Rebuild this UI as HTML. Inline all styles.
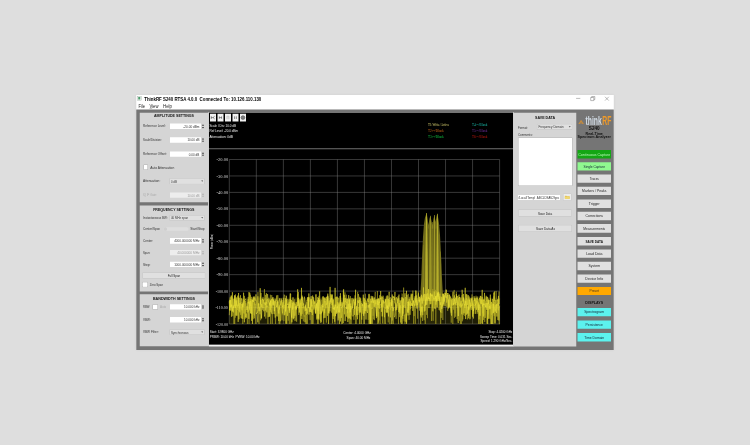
<!DOCTYPE html>
<html><head><meta charset="utf-8"><title>ThinkRF S240 RTSA</title>
<style>
html,body{margin:0;padding:0;}
body{width:750px;height:445px;background:#dedede;position:relative;overflow:hidden;font-family:"Liberation Sans",sans-serif;}
#r{position:absolute;left:0;top:0;width:750px;height:445px;overflow:hidden;filter:blur(0.4px);}
#s{position:absolute;left:0;top:0;width:3000px;height:1780px;transform:scale(0.25);transform-origin:0 0;}
#s div,#s svg,#s .t{position:absolute;}
#s .t{white-space:nowrap;display:block;}
</style></head><body><div id="r"><div id="s">
<div style="left:544.80px;top:380px;width:1910px;height:1020.40px;background:#ffffff;box-shadow:0 0 12px rgba(0,0,0,.06);"></div>
<div style="left:544.80px;top:438.40px;width:1910px;height:962px;background:#757575;"></div>
<div style="left:548.80px;top:384.40px;width:18.40px;height:17.20px;background:#f4f6f4;border:1.40px solid #7a8a80;box-sizing:border-box;"></div>
<div style="left:552.80px;top:388.40px;width:8px;height:10px;background:#4a9a6a;"></div>
<span class="t" style="top:384.56px;font-size:18.40px;line-height:22.08px;color:#000;font-family:'Liberation Sans',sans-serif;font-weight:bold;left:577.20px;transform:scaleX(0.952);transform-origin:left center;">ThinkRF S240 RTSA 4.0.0&nbsp; Connected To: 10.126.110.130</span>
<span class="t" style="top:413.76px;font-size:18.40px;line-height:22.08px;color:#222;font-family:'Liberation Sans',sans-serif;left:554.40px;transform:scaleX(0.863);transform-origin:left center;">File</span>
<span class="t" style="top:413.76px;font-size:18.40px;line-height:22.08px;color:#222;font-family:'Liberation Sans',sans-serif;left:598.40px;transform:scaleX(0.9);transform-origin:left center;"><u>V</u>iew</span>
<span class="t" style="top:413.76px;font-size:18.40px;line-height:22.08px;color:#222;font-family:'Liberation Sans',sans-serif;left:652px;transform:scaleX(0.951);transform-origin:left center;">Help</span>
<svg style="left:2280px;top:376px" width="176" height="40" viewBox="0 0 44 10"><g stroke="#666" stroke-width="0.45" fill="none"><path d="M6.1 4.4h4.2"/><path d="M20.7 3.5h3.1v3.1h-3.1zM21.7 3.5v-1h3.1v3.1h-1"/><path d="M35.0 2.8l3.8 3.8M38.8 2.8l-3.8 3.8"/></g></svg>
<div style="left:558.80px;top:450.80px;width:274.40px;height:358.40px;background:#d5d5d5;"></div>
<div style="left:558.80px;top:822px;width:274.40px;height:344px;background:#d5d5d5;"></div>
<div style="left:558.80px;top:1177.20px;width:274.40px;height:208px;background:#d5d5d5;"></div>
<span class="t" style="top:452.32px;font-size:16.80px;line-height:20.16px;color:#111;font-family:'Liberation Sans',sans-serif;font-weight:bold;left:696px;transform:translateX(-50%) scaleX(0.857);transform-origin:center center;">AMPLITUDE SETTINGS</span>
<span class="t" style="top:494.40px;font-size:16px;line-height:19.20px;color:#333;font-family:'Liberation Sans',sans-serif;left:572px;transform:scaleX(0.751);transform-origin:left center;">Reference Level:</span>
<div style="left:679.60px;top:493.60px;width:124.40px;height:22.80px;background:#ffffff;"></div>
<span class="t" style="top:495.40px;font-size:16px;line-height:19.20px;color:#333;font-family:'Liberation Sans',sans-serif;right:2202.40px;transform:scaleX(0.783);transform-origin:right center;">-20.00 dBm</span>
<svg style="left:805.60px;top:493.60px" width="12" height="22.8" viewBox="0 0 3 5.70"><path d="M0.4 2.35l1.1 -1.5l1.1 1.5zM0.4 3.45l1.1 1.5l1.1 -1.5z" fill="#333"/></svg>
<span class="t" style="top:550px;font-size:16px;line-height:19.20px;color:#333;font-family:'Liberation Sans',sans-serif;left:572px;transform:scaleX(0.713);transform-origin:left center;">Scale/Division:</span>
<div style="left:679.60px;top:548.80px;width:124.40px;height:22.40px;background:#ffffff;"></div>
<span class="t" style="top:550.40px;font-size:16px;line-height:19.20px;color:#333;font-family:'Liberation Sans',sans-serif;right:2202.40px;transform:scaleX(0.756);transform-origin:right center;">10.00 dB</span>
<svg style="left:805.60px;top:548.80px" width="12" height="22.4" viewBox="0 0 3 5.60"><path d="M0.4 2.30l1.1 -1.5l1.1 1.5zM0.4 3.40l1.1 1.5l1.1 -1.5z" fill="#333"/></svg>
<span class="t" style="top:606.40px;font-size:16px;line-height:19.20px;color:#333;font-family:'Liberation Sans',sans-serif;left:572px;transform:scaleX(0.758);transform-origin:left center;">Reference Offset:</span>
<div style="left:679.60px;top:605.60px;width:124.40px;height:21.60px;background:#ffffff;"></div>
<span class="t" style="top:606.80px;font-size:16px;line-height:19.20px;color:#333;font-family:'Liberation Sans',sans-serif;right:2202.40px;transform:scaleX(0.769);transform-origin:right center;">0.00 dB</span>
<svg style="left:805.60px;top:605.60px" width="12" height="21.6" viewBox="0 0 3 5.40"><path d="M0.4 2.20l1.1 -1.5l1.1 1.5zM0.4 3.30l1.1 1.5l1.1 -1.5z" fill="#333"/></svg>
<div style="left:575.60px;top:660.40px;width:14.80px;height:17.60px;background:#fff;box-shadow:0 0 0 1.20px #999;"></div>
<span class="t" style="top:660px;font-size:16px;line-height:19.20px;color:#333;font-family:'Liberation Sans',sans-serif;left:600.80px;transform:scaleX(0.817);transform-origin:left center;">Auto Attenuation</span>
<span class="t" style="top:713.60px;font-size:16px;line-height:19.20px;color:#333;font-family:'Liberation Sans',sans-serif;left:572px;transform:scaleX(0.81);transform-origin:left center;">Attenuation:</span>
<div style="left:679.60px;top:714px;width:136.80px;height:20.80px;background:#e0e0e0;box-shadow:0 0 0 1.20px #bdbdbd;"></div>
<span class="t" style="top:714.80px;font-size:16px;line-height:19.20px;color:#333;font-family:'Liberation Sans',sans-serif;left:684.40px;transform:scaleX(0.705);transform-origin:left center;">0 dB</span>
<svg style="left:803.60px;top:720.40px" width="9.6" height="8" viewBox="0 0 2.4 2"><path d="M0.2 0.4h2l-1 1.3z" fill="#444"/></svg>
<span class="t" style="top:769.60px;font-size:16px;line-height:19.20px;color:#aaa;font-family:'Liberation Sans',sans-serif;left:572px;transform:scaleX(0.716);transform-origin:left center;">IQ IF Gain:</span>
<div style="left:679.60px;top:769.60px;width:124.40px;height:21.60px;background:#ededed;"></div>
<span class="t" style="top:770.80px;font-size:16px;line-height:19.20px;color:#999;font-family:'Liberation Sans',sans-serif;right:2202.40px;transform:scaleX(0.756);transform-origin:right center;">10.00 dB</span>
<svg style="left:805.60px;top:769.60px" width="12" height="21.6" viewBox="0 0 3 5.40"><path d="M0.4 2.20l1.1 -1.5l1.1 1.5zM0.4 3.30l1.1 1.5l1.1 -1.5z" fill="#aaa"/></svg>
<span class="t" style="top:829.12px;font-size:16.80px;line-height:20.16px;color:#111;font-family:'Liberation Sans',sans-serif;font-weight:bold;left:695.20px;transform:translateX(-50%) scaleX(0.85);transform-origin:center center;">FREQUENCY SETTINGS</span>
<span class="t" style="top:860.80px;font-size:16px;line-height:19.20px;color:#333;font-family:'Liberation Sans',sans-serif;left:572px;transform:scaleX(0.726);transform-origin:left center;">Instantaneous BW:</span>
<div style="left:679.60px;top:861.60px;width:136.80px;height:19.60px;background:#e0e0e0;box-shadow:0 0 0 1.20px #bdbdbd;"></div>
<span class="t" style="top:861.80px;font-size:16px;line-height:19.20px;color:#333;font-family:'Liberation Sans',sans-serif;left:684.40px;transform:scaleX(0.726);transform-origin:left center;">40 MHz span</span>
<svg style="left:803.60px;top:867.40px" width="9.6" height="8" viewBox="0 0 2.4 2"><path d="M0.2 0.4h2l-1 1.3z" fill="#444"/></svg>
<span class="t" style="top:906.40px;font-size:16px;line-height:19.20px;color:#333;font-family:'Liberation Sans',sans-serif;left:572px;transform:scaleX(0.757);transform-origin:left center;">Center/Span</span>
<div style="left:654px;top:908.80px;width:100px;height:14.40px;background:#dedede;border-radius:6px;"></div>
<div style="left:654.80px;top:909.20px;width:13.20px;height:13.60px;background:#cfcfcf;border-radius:6px;"></div>
<span class="t" style="top:906.40px;font-size:16px;line-height:19.20px;color:#333;font-family:'Liberation Sans',sans-serif;right:2182px;transform:scaleX(0.804);transform-origin:right center;">Start/Stop</span>
<span class="t" style="top:952.40px;font-size:16px;line-height:19.20px;color:#333;font-family:'Liberation Sans',sans-serif;left:572px;transform:scaleX(0.778);transform-origin:left center;">Center:</span>
<div style="left:679.60px;top:952.40px;width:124.40px;height:22.80px;background:#ffffff;"></div>
<span class="t" style="top:954.20px;font-size:16px;line-height:19.20px;color:#333;font-family:'Liberation Sans',sans-serif;right:2202.40px;transform:scaleX(0.774);transform-origin:right center;">4000.000000 MHz</span>
<svg style="left:805.60px;top:952.40px" width="12" height="22.8" viewBox="0 0 3 5.70"><path d="M0.4 2.35l1.1 -1.5l1.1 1.5zM0.4 3.45l1.1 1.5l1.1 -1.5z" fill="#333"/></svg>
<span class="t" style="top:999.20px;font-size:16px;line-height:19.20px;color:#333;font-family:'Liberation Sans',sans-serif;left:572px;transform:scaleX(0.689);transform-origin:left center;">Span:</span>
<div style="left:679.60px;top:999.60px;width:124.40px;height:21.60px;background:#ededed;"></div>
<span class="t" style="top:1000.80px;font-size:16px;line-height:19.20px;color:#999;font-family:'Liberation Sans',sans-serif;right:2202.40px;transform:scaleX(0.79);transform-origin:right center;">40.000000 MHz</span>
<svg style="left:805.60px;top:999.60px" width="12" height="21.6" viewBox="0 0 3 5.40"><path d="M0.4 2.20l1.1 -1.5l1.1 1.5zM0.4 3.30l1.1 1.5l1.1 -1.5z" fill="#aaa"/></svg>
<span class="t" style="top:1047.20px;font-size:16px;line-height:19.20px;color:#333;font-family:'Liberation Sans',sans-serif;left:572px;transform:scaleX(0.803);transform-origin:left center;">Step:</span>
<div style="left:679.60px;top:1046.80px;width:124.40px;height:20.80px;background:#ffffff;"></div>
<span class="t" style="top:1047.60px;font-size:16px;line-height:19.20px;color:#333;font-family:'Liberation Sans',sans-serif;right:2202.40px;transform:scaleX(0.774);transform-origin:right center;">1000.000000 MHz</span>
<svg style="left:805.60px;top:1046.80px" width="12" height="20.8" viewBox="0 0 3 5.20"><path d="M0.4 2.10l1.1 -1.5l1.1 1.5zM0.4 3.20l1.1 1.5l1.1 -1.5z" fill="#333"/></svg>
<div style="left:571.20px;top:1091.60px;width:248px;height:20.40px;background:#e0e0e0;box-shadow:0 0 0 1.20px #bdbdbd;"></div>
<span class="t" style="top:1092.40px;font-size:16px;line-height:19.20px;color:#222;font-family:'Liberation Sans',sans-serif;left:695.60px;transform:translateX(-50%) scaleX(0.734);transform-origin:center center;">Full Span</span>
<div style="left:570.40px;top:1128.80px;width:19.60px;height:18px;background:#fff;box-shadow:0 0 0 1.20px #999;"></div>
<span class="t" style="top:1128px;font-size:16px;line-height:19.20px;color:#333;font-family:'Liberation Sans',sans-serif;left:599.20px;transform:scaleX(0.707);transform-origin:left center;">Zero Span</span>
<span class="t" style="top:1182.72px;font-size:16.80px;line-height:20.16px;color:#111;font-family:'Liberation Sans',sans-serif;font-weight:bold;left:696px;transform:translateX(-50%) scaleX(0.876);transform-origin:center center;">BANDWIDTH SETTINGS</span>
<span class="t" style="top:1218px;font-size:16px;line-height:19.20px;color:#333;font-family:'Liberation Sans',sans-serif;left:572px;transform:scaleX(0.675);transform-origin:left center;">RBW:</span>
<div style="left:612px;top:1218.80px;width:18.40px;height:18px;background:#fff;box-shadow:0 0 0 1.20px #999;"></div>
<span class="t" style="top:1218px;font-size:16px;line-height:19.20px;color:#aaa;font-family:'Liberation Sans',sans-serif;left:640px;transform:scaleX(0.741);transform-origin:left center;">Auto</span>
<div style="left:679.60px;top:1216.80px;width:124.40px;height:21.60px;background:#ffffff;"></div>
<span class="t" style="top:1218px;font-size:16px;line-height:19.20px;color:#333;font-family:'Liberation Sans',sans-serif;right:2202.40px;transform:scaleX(0.766);transform-origin:right center;">10.000 kHz</span>
<svg style="left:805.60px;top:1216.80px" width="12" height="21.6" viewBox="0 0 3 5.40"><path d="M0.4 2.20l1.1 -1.5l1.1 1.5zM0.4 3.30l1.1 1.5l1.1 -1.5z" fill="#333"/></svg>
<span class="t" style="top:1268.80px;font-size:16px;line-height:19.20px;color:#333;font-family:'Liberation Sans',sans-serif;left:572px;transform:scaleX(0.739);transform-origin:left center;">VBW:</span>
<div style="left:679.60px;top:1268px;width:124.40px;height:21.60px;background:#ffffff;"></div>
<span class="t" style="top:1269.20px;font-size:16px;line-height:19.20px;color:#333;font-family:'Liberation Sans',sans-serif;right:2202.40px;transform:scaleX(0.766);transform-origin:right center;">10.000 kHz</span>
<svg style="left:805.60px;top:1268px" width="12" height="21.6" viewBox="0 0 3 5.40"><path d="M0.4 2.20l1.1 -1.5l1.1 1.5zM0.4 3.30l1.1 1.5l1.1 -1.5z" fill="#333"/></svg>
<span class="t" style="top:1318.40px;font-size:16px;line-height:19.20px;color:#333;font-family:'Liberation Sans',sans-serif;left:572px;transform:scaleX(0.771);transform-origin:left center;">VBW Filter:</span>
<div style="left:679.60px;top:1318.80px;width:136.80px;height:19.20px;background:#e0e0e0;box-shadow:0 0 0 1.20px #bdbdbd;"></div>
<span class="t" style="top:1318.80px;font-size:16px;line-height:19.20px;color:#333;font-family:'Liberation Sans',sans-serif;left:684.40px;transform:scaleX(0.75);transform-origin:left center;">Synchronous</span>
<svg style="left:803.60px;top:1324.40px" width="9.6" height="8" viewBox="0 0 2.4 2"><path d="M0.2 0.4h2l-1 1.3z" fill="#444"/></svg>
<div style="left:833.20px;top:449.20px;width:2.80px;height:936px;background:#e8e8e8;"></div>
<div style="left:836px;top:1378.40px;width:1216px;height:7.60px;background:#f2f2f2;"></div>
<div style="left:2051.60px;top:449.20px;width:3.20px;height:936.80px;background:#ececec;"></div>
<div style="left:836px;top:452.40px;width:1215.60px;height:926px;background:#000;"></div>
<div style="left:840px;top:455.20px;width:24.40px;height:30.40px;background:#f2f2f2;"></div>
<svg style="left:839.40px;top:455.20px" width="25.6" height="30.4" viewBox="0 0 6.4 7.6"><path d="M1.5 2.5v2.7M1.5 3.85h1.7M4.9 2.5L3.3 3.85L4.9 5.2" stroke="#333" stroke-width="0.55" fill="none"/></svg>
<div style="left:869.96px;top:455.20px;width:24.40px;height:30.40px;background:#f2f2f2;"></div>
<svg style="left:869.36px;top:455.20px" width="25.6" height="30.4" viewBox="0 0 6.4 7.6"><path d="M2.1 2.7v2.3M4.3 2.7v2.3M2.1 3.85h2.2" stroke="#444" stroke-width="0.6" fill="none"/></svg>
<div style="left:899.92px;top:455.20px;width:24.40px;height:30.40px;background:#f2f2f2;"></div>
<svg style="left:899.32px;top:455.20px" width="25.6" height="30.4" viewBox="0 0 6.4 7.6"><path d="M2.3 2.3v3.1M4.1 2.3v3.1" stroke="#777" stroke-width="0.6" stroke-dasharray="0.5 0.4" fill="none"/><path d="M2.3 2.4h1.8" stroke="#aaa" stroke-width="0.4"/></svg>
<div style="left:929.88px;top:455.20px;width:24.40px;height:30.40px;background:#f2f2f2;"></div>
<svg style="left:929.28px;top:455.20px" width="25.6" height="30.4" viewBox="0 0 6.4 7.6"><path d="M2.3 2.6v2.6M4.1 2.6v2.6" stroke="#555" stroke-width="0.65" fill="none"/></svg>
<div style="left:959.84px;top:455.20px;width:24.40px;height:30.40px;background:#f2f2f2;"></div>
<svg style="left:959.24px;top:455.20px" width="25.6" height="30.4" viewBox="0 0 6.4 7.6"><circle cx="3.2" cy="3.85" r="2.2" fill="#6a6a6a"/><path d="M3.2 1.2v5.3M0.7 3.85h5" stroke="#999" stroke-width="0.4"/><ellipse cx="3.2" cy="3.85" rx="1.1" ry="2.2" fill="none" stroke="#8a8a8a" stroke-width="0.3"/></svg>
<span class="t" style="top:490.56px;font-size:16.40px;line-height:19.68px;color:#eee;font-family:'Liberation Sans',sans-serif;left:838.40px;transform:scaleX(0.736);transform-origin:left center;">Scale / Div: 10.0 dB</span>
<span class="t" style="top:513.76px;font-size:16.40px;line-height:19.68px;color:#eee;font-family:'Liberation Sans',sans-serif;left:838.40px;transform:scaleX(0.74);transform-origin:left center;">Ref Level: -20.0 dBm</span>
<span class="t" style="top:536.16px;font-size:16.40px;line-height:19.68px;color:#eee;font-family:'Liberation Sans',sans-serif;left:838.40px;transform:scaleX(0.775);transform-origin:left center;">Attenuation: 0dB</span>
<span class="t" style="top:491.28px;font-size:15.20px;line-height:18.24px;color:#d8d070;font-family:'Liberation Serif',serif;left:1712px;transform:scaleX(0.853);transform-origin:left center;">T1:Write/Active</span>
<span class="t" style="top:514.08px;font-size:15.20px;line-height:18.24px;color:#c86418;font-family:'Liberation Serif',serif;left:1712px;transform:scaleX(0.875);transform-origin:left center;">T2:--/Blank</span>
<span class="t" style="top:536.08px;font-size:15.20px;line-height:18.24px;color:#10c040;font-family:'Liberation Serif',serif;left:1712px;transform:scaleX(0.875);transform-origin:left center;">T3:--/Blank</span>
<span class="t" style="top:491.28px;font-size:15.20px;line-height:18.24px;color:#18b8a8;font-family:'Liberation Serif',serif;left:1888px;transform:scaleX(0.858);transform-origin:left center;">T4:--/Blank</span>
<span class="t" style="top:514.08px;font-size:15.20px;line-height:18.24px;color:#70309a;font-family:'Liberation Serif',serif;left:1888px;transform:scaleX(0.858);transform-origin:left center;">T5:--/Blank</span>
<span class="t" style="top:536.08px;font-size:15.20px;line-height:18.24px;color:#c01810;font-family:'Liberation Serif',serif;left:1888px;transform:scaleX(0.858);transform-origin:left center;">T6:--/Blank</span>
<div style="left:836px;top:593.20px;width:1215.60px;height:4px;background:#707070;"></div>
<svg style="left:0;top:0" width="3000" height="1780" viewBox="0 0 750 445"><path d="M229.30 159.5V324.0M229.3 159.50H499.6M256.33 159.5V324.0M229.3 175.95H499.6M283.36 159.5V324.0M229.3 192.40H499.6M310.39 159.5V324.0M229.3 208.85H499.6M337.42 159.5V324.0M229.3 225.30H499.6M364.45 159.5V324.0M229.3 241.75H499.6M391.48 159.5V324.0M229.3 258.20H499.6M418.51 159.5V324.0M229.3 274.65H499.6M445.54 159.5V324.0M229.3 291.10H499.6M472.57 159.5V324.0M229.3 307.55H499.6M499.60 159.5V324.0M229.3 324.00H499.6" stroke="#858585" stroke-width="0.42" fill="none"/><polygon points="419.8,301.0 419.8,301.0 420.6,291.1 421.3,277.9 422.0,258.2 423.0,236.8 424.0,223.7 424.9,217.9 425.7,215.4 426.7,213.0 427.6,218.7 428.4,225.3 429.4,218.7 430.4,215.8 431.4,220.4 432.5,225.3 433.5,218.7 434.5,215.1 435.6,222.0 436.4,217.1 437.2,213.8 438.2,217.9 439.0,223.7 440.0,235.2 441.0,254.9 441.8,274.6 442.6,289.5 443.6,301.0 443.6,301.0" fill="#6f6a1b"/><polygon points="426.15,213.0 426.85,213.0 427.65,258.2 428.05,301.0 424.95,301.0 425.35,258.2" fill="#c2ba2e" opacity="0.85"/><polygon points="430.05,215.8 430.75,215.8 431.40,258.2 431.80,301.0 429.00,301.0 429.40,258.2" fill="#a8a128" opacity="0.8"/><polygon points="432.05,222.0 432.75,222.0 433.00,258.2 433.40,301.0 431.40,301.0 431.80,258.2" fill="#989226" opacity="0.7"/><polygon points="434.15,215.1 434.85,215.1 435.40,258.2 435.80,301.0 433.20,301.0 433.60,258.2" fill="#aea62a" opacity="0.8"/><polygon points="437.05,213.8 437.75,213.8 438.50,258.2 438.90,301.0 435.90,301.0 436.30,258.2" fill="#c2ba2e" opacity="0.85"/><polygon points="422.95,245.0 423.65,245.0 423.75,258.2 424.15,301.0 422.45,301.0 422.85,258.2" fill="#8f8922" opacity="0.7"/><polygon points="440.25,251.6 440.95,251.6 441.05,258.2 441.45,301.0 439.75,301.0 440.15,258.2" fill="#8f8922" opacity="0.7"/><path d="M428.5 228.6V291.1" stroke="#4a4710" stroke-width="0.7" opacity="0.7"/><path d="M432.9 228.6V291.1" stroke="#4a4710" stroke-width="0.7" opacity="0.7"/><path d="M435.9 228.6V291.1" stroke="#4a4710" stroke-width="0.7" opacity="0.7"/><rect x="229.3" y="297.7" width="194.2" height="26.3" fill="#7d7818" opacity="0.25"/><rect x="423.5" y="301.0" width="17.5" height="23.0" fill="#5a5614" opacity="0.45"/><rect x="441" y="297.7" width="58.6" height="26.3" fill="#7d7818" opacity="0.25"/><polyline points="229.30,303.40 229.57,299.71 229.84,310.30 230.11,297.37 230.38,307.63 230.65,304.22 230.92,296.78 231.19,307.03 231.46,295.77 231.73,305.54 232.00,297.27 232.27,298.01 232.54,305.36 232.81,316.12 233.08,299.00 233.35,301.37 233.62,309.71 233.90,324.00 234.17,308.53 234.44,304.82 234.71,324.00 234.98,296.25 235.25,317.69 235.52,302.73 235.79,299.54 236.06,298.83 236.33,303.10 236.60,315.65 236.87,300.42 237.14,308.64 237.41,310.00 237.68,304.35 237.95,307.89 238.22,296.99 238.49,296.85 238.76,300.99 239.03,311.08 239.30,305.42 239.57,303.21 239.84,308.73 240.11,305.93 240.38,302.93 240.65,314.75 240.92,311.60 241.19,301.80 241.46,308.47 241.73,307.40 242.00,318.65 242.27,312.50 242.54,302.69 242.81,324.00 243.09,298.84 243.36,305.24 243.63,313.40 243.90,299.74 244.17,306.65 244.44,295.86 244.71,310.75 244.98,313.66 245.25,308.44 245.52,318.67 245.79,303.20 246.06,311.49 246.33,308.93 246.60,308.60 246.87,305.99 247.14,316.74 247.41,324.00 247.68,306.35 247.95,310.64 248.22,296.90 248.49,311.67 248.76,310.20 249.03,324.00 249.30,315.90 249.57,302.63 249.84,304.61 250.11,310.76 250.38,294.74 250.65,306.10 250.92,300.13 251.19,298.81 251.46,296.83 251.73,313.78 252.01,299.15 252.28,301.88 252.55,304.71 252.82,318.43 253.09,297.66 253.36,305.85 253.63,307.92 253.90,319.17 254.17,315.78 254.44,318.00 254.71,302.50 254.98,305.18 255.25,304.08 255.52,319.23 255.79,324.00 256.06,299.71 256.33,300.32 256.60,301.55 256.87,301.58 257.14,306.57 257.41,308.81 257.68,302.19 257.95,292.08 258.22,305.25 258.49,304.29 258.76,308.29 259.03,324.00 259.30,311.36 259.57,307.20 259.84,309.47 260.11,310.96 260.38,296.61 260.65,320.30 260.93,314.21 261.20,318.61 261.47,314.89 261.74,304.74 262.01,304.86 262.28,298.41 262.55,309.88 262.82,296.96 263.09,297.17 263.36,301.05 263.63,299.99 263.90,303.72 264.17,296.54 264.44,289.09 264.71,299.72 264.98,298.35 265.25,304.18 265.52,294.97 265.79,318.60 266.06,309.39 266.33,299.65 266.60,301.97 266.87,303.86 267.14,304.19 267.41,298.97 267.68,317.19 267.95,324.00 268.22,306.19 268.49,306.55 268.76,297.84 269.03,298.37 269.30,303.77 269.57,302.23 269.85,316.21 270.12,299.97 270.39,294.78 270.66,324.00 270.93,307.47 271.20,299.60 271.47,307.79 271.74,295.09 272.01,307.47 272.28,324.00 272.55,317.96 272.82,311.52 273.09,302.15 273.36,304.24 273.63,300.10 273.90,313.92 274.17,307.56 274.44,314.17 274.71,303.52 274.98,301.36 275.25,315.45 275.52,324.00 275.79,317.38 276.06,315.22 276.33,315.74 276.60,312.83 276.87,301.44 277.14,307.24 277.41,304.02 277.68,295.23 277.95,295.15 278.22,302.52 278.49,302.11 278.76,311.41 279.04,324.00 279.31,305.81 279.58,323.78 279.85,324.00 280.12,324.00 280.39,304.20 280.66,301.31 280.93,301.44 281.20,300.79 281.47,300.96 281.74,309.63 282.01,320.36 282.28,316.76 282.55,306.46 282.82,310.35 283.09,314.96 283.36,297.81 283.63,310.55 283.90,321.11 284.17,314.29 284.44,313.17 284.71,306.43 284.98,300.37 285.25,314.55 285.52,303.57 285.79,315.01 286.06,324.00 286.33,304.80 286.60,304.91 286.87,324.00 287.14,312.36 287.41,300.17 287.68,299.09 287.96,299.71 288.23,320.71 288.50,315.24 288.77,299.59 289.04,316.10 289.31,324.00 289.58,310.46 289.85,303.92 290.12,307.91 290.39,299.19 290.66,293.92 290.93,324.00 291.20,310.27 291.47,307.43 291.74,323.39 292.01,305.55 292.28,318.45 292.55,316.09 292.82,301.10 293.09,301.96 293.36,302.79 293.63,301.73 293.90,308.75 294.17,302.12 294.44,305.26 294.71,299.19 294.98,321.13 295.25,303.99 295.52,306.03 295.79,308.68 296.06,320.67 296.33,305.29 296.60,321.80 296.88,306.91 297.15,307.54 297.42,307.37 297.69,294.39 297.96,305.67 298.23,300.48 298.50,292.03 298.77,314.94 299.04,300.23 299.31,306.34 299.58,312.37 299.85,308.08 300.12,303.44 300.39,307.26 300.66,308.05 300.93,314.37 301.20,298.49 301.47,308.16 301.74,301.90 302.01,302.47 302.28,313.93 302.55,307.04 302.82,308.19 303.09,313.50 303.36,321.34 303.63,305.73 303.90,309.35 304.17,306.99 304.44,307.13 304.71,311.42 304.98,305.91 305.25,307.58 305.52,306.43 305.79,324.00 306.07,311.60 306.34,318.74 306.61,324.00 306.88,302.12 307.15,308.14 307.42,324.00 307.69,316.74 307.96,299.36 308.23,298.94 308.50,305.71 308.77,297.37 309.04,301.73 309.31,297.39 309.58,310.78 309.85,314.35 310.12,320.12 310.39,299.80 310.66,312.10 310.93,310.54 311.20,299.51 311.47,319.14 311.74,324.00 312.01,301.29 312.28,324.00 312.55,304.85 312.82,306.62 313.09,324.00 313.36,316.38 313.63,299.97 313.90,305.50 314.17,307.20 314.44,303.70 314.71,300.77 314.99,303.30 315.26,312.28 315.53,294.47 315.80,308.02 316.07,305.68 316.34,294.33 316.61,303.55 316.88,309.63 317.15,307.13 317.42,297.05 317.69,324.00 317.96,314.52 318.23,324.00 318.50,298.45 318.77,302.24 319.04,295.89 319.31,314.17 319.58,302.34 319.85,299.15 320.12,305.32 320.39,321.25 320.66,315.77 320.93,302.10 321.20,299.67 321.47,321.93 321.74,308.39 322.01,311.64 322.28,297.96 322.55,296.76 322.82,311.29 323.09,305.38 323.36,297.36 323.63,323.94 323.91,309.89 324.18,315.04 324.45,297.77 324.72,317.57 324.99,297.14 325.26,317.93 325.53,305.94 325.80,303.70 326.07,308.00 326.34,322.66 326.61,302.29 326.88,299.14 327.15,307.44 327.42,301.69 327.69,298.59 327.96,299.97 328.23,296.44 328.50,300.90 328.77,303.17 329.04,303.03 329.31,313.48 329.58,302.73 329.85,306.88 330.12,300.36 330.39,303.85 330.66,294.34 330.93,301.94 331.20,294.05 331.47,312.62 331.74,307.96 332.01,300.62 332.28,306.36 332.55,323.51 332.82,298.49 333.10,315.77 333.37,305.51 333.64,306.78 333.91,316.48 334.18,304.75 334.45,307.02 334.72,311.28 334.99,324.00 335.26,303.77 335.53,316.37 335.80,311.82 336.07,309.92 336.34,304.98 336.61,303.87 336.88,296.63 337.15,299.16 337.42,297.30 337.69,312.86 337.96,302.04 338.23,300.01 338.50,297.80 338.77,316.80 339.04,318.38 339.31,310.81 339.58,302.57 339.85,301.77 340.12,302.80 340.39,306.06 340.66,299.87 340.93,305.78 341.20,302.20 341.47,324.00 341.74,324.00 342.02,307.87 342.29,301.81 342.56,324.00 342.83,303.12 343.10,304.04 343.37,290.52 343.64,304.53 343.91,306.36 344.18,306.94 344.45,300.88 344.72,306.98 344.99,292.33 345.26,302.22 345.53,297.97 345.80,304.88 346.07,296.00 346.34,294.73 346.61,303.02 346.88,301.57 347.15,308.73 347.42,307.49 347.69,313.18 347.96,310.47 348.23,312.09 348.50,318.90 348.77,304.68 349.04,303.45 349.31,324.00 349.58,299.67 349.85,312.34 350.12,310.10 350.39,296.11 350.66,316.51 350.94,319.75 351.21,309.71 351.48,312.64 351.75,315.48 352.02,299.41 352.29,307.37 352.56,306.97 352.83,316.49 353.10,315.16 353.37,316.10 353.64,308.69 353.91,319.81 354.18,311.15 354.45,311.44 354.72,301.51 354.99,295.37 355.26,299.25 355.53,304.12 355.80,298.45 356.07,316.54 356.34,308.12 356.61,309.72 356.88,309.68 357.15,311.08 357.42,306.66 357.69,291.81 357.96,314.88 358.23,313.10 358.50,306.94 358.77,307.62 359.04,310.52 359.31,297.12 359.58,312.73 359.85,301.97 360.13,297.44 360.40,302.24 360.67,312.50 360.94,300.97 361.21,312.83 361.48,324.00 361.75,306.75 362.02,304.54 362.29,306.45 362.56,311.17 362.83,313.74 363.10,309.46 363.37,310.09 363.64,297.55 363.91,299.62 364.18,302.01 364.45,312.94 364.72,303.02 364.99,308.32 365.26,293.70 365.53,296.90 365.80,302.31 366.07,310.85 366.34,311.40 366.61,310.95 366.88,302.75 367.15,307.22 367.42,306.16 367.69,306.19 367.96,298.84 368.23,319.87 368.50,300.84 368.77,324.00 369.05,323.69 369.32,294.27 369.59,306.04 369.86,315.80 370.13,324.00 370.40,305.85 370.67,302.30 370.94,301.07 371.21,324.00 371.48,301.09 371.75,308.62 372.02,299.47 372.29,307.37 372.56,324.00 372.83,299.22 373.10,315.81 373.37,307.05 373.64,319.39 373.91,311.71 374.18,301.52 374.45,320.15 374.72,306.58 374.99,294.91 375.26,291.90 375.53,306.69 375.80,305.86 376.07,302.95 376.34,299.43 376.61,303.77 376.88,303.23 377.15,316.72 377.42,291.02 377.69,313.16 377.97,316.67 378.24,298.86 378.51,322.60 378.78,311.97 379.05,320.42 379.32,302.69 379.59,304.30 379.86,304.70 380.13,324.00 380.40,308.76 380.67,304.07 380.94,305.38 381.21,302.38 381.48,296.28 381.75,298.29 382.02,316.42 382.29,302.58 382.56,323.55 382.83,301.84 383.10,302.17 383.37,307.03 383.64,300.55 383.91,304.28 384.18,324.00 384.45,319.14 384.72,315.37 384.99,309.69 385.26,321.31 385.53,324.00 385.80,307.80 386.07,312.07 386.34,296.26 386.61,312.46 386.88,305.74 387.16,313.10 387.43,309.98 387.70,302.50 387.97,296.20 388.24,322.49 388.51,298.91 388.78,306.12 389.05,303.59 389.32,302.68 389.59,312.59 389.86,324.00 390.13,301.90 390.40,310.18 390.67,302.69 390.94,307.83 391.21,304.50 391.48,299.82 391.75,299.67 392.02,300.72 392.29,320.48 392.56,306.48 392.83,300.95 393.10,320.46 393.37,324.00 393.64,305.48 393.91,299.01 394.18,300.27 394.45,297.57 394.72,303.30 394.99,297.55 395.26,301.21 395.53,301.59 395.80,307.85 396.08,318.89 396.35,312.59 396.62,304.56 396.89,304.56 397.16,306.76 397.43,303.79 397.70,303.02 397.97,296.27 398.24,301.78 398.51,324.00 398.78,298.30 399.05,306.17 399.32,308.96 399.59,317.10 399.86,300.35 400.13,301.47 400.40,300.98 400.67,303.94 400.94,304.82 401.21,324.00 401.48,316.15 401.75,317.46 402.02,293.59 402.29,294.33 402.56,310.75 402.83,318.83 403.10,305.11 403.37,307.51 403.64,287.57 403.91,303.39 404.18,321.31 404.45,314.66 404.72,316.09 405.00,324.00 405.27,300.38 405.54,297.02 405.81,298.20 406.08,305.71 406.35,309.45 406.62,322.61 406.89,310.50 407.16,308.40 407.43,311.81 407.70,304.12 407.97,306.03 408.24,293.90 408.51,312.26 408.78,299.48 409.05,319.87 409.32,307.99 409.59,300.79 409.86,296.84 410.13,299.64 410.40,307.56 410.67,309.16 410.94,296.19 411.21,294.76 411.48,304.81 411.75,306.04 412.02,301.97 412.29,298.64 412.56,306.30 412.83,290.58 413.10,300.07 413.37,303.13 413.64,323.92 413.91,307.08 414.19,316.08 414.46,303.21 414.73,298.39 415.00,298.59 415.27,323.89 415.54,308.37 415.81,299.63 416.08,291.17 416.35,303.29 416.62,307.30 416.89,301.61 417.16,298.35 417.43,306.95 417.70,318.67 417.97,297.55 418.24,291.62 418.51,299.68 418.78,301.23 419.05,307.03 419.32,296.66 419.59,310.65 419.86,308.54 420.13,302.66 420.40,296.60 420.67,324.00 420.94,298.69 421.21,311.29 421.48,296.95 421.75,296.70 422.02,308.84 422.29,298.11 422.56,321.00 422.83,301.98 423.11,295.72 423.38,296.47 423.65,300.27 423.92,305.68 424.19,320.27 424.46,294.52 424.73,299.64 425.00,295.99 425.27,324.00 425.54,294.25 425.81,291.25 426.08,291.58 426.35,299.42 426.62,314.84 426.89,307.21 427.16,300.05 427.43,318.19 427.70,289.94 427.97,298.96 428.24,294.62 428.51,298.38 428.78,293.41 429.05,295.42 429.32,300.73 429.59,296.43 429.86,295.04 430.13,289.64 430.40,300.80 430.67,291.27 430.94,296.36 431.21,299.63 431.48,320.97 431.75,296.43 432.02,297.51 432.30,307.60 432.57,304.12 432.84,289.12 433.11,320.79 433.38,298.85 433.65,300.99 433.92,294.73 434.19,307.04 434.46,308.21 434.73,297.75 435.00,300.00 435.27,300.65 435.54,289.85 435.81,324.00 436.08,300.56 436.35,292.54 436.62,298.91 436.89,303.93 437.16,307.51 437.43,296.82 437.70,297.27 437.97,299.75 438.24,296.34 438.51,299.02 438.78,299.83 439.05,309.92 439.32,298.63 439.59,310.44 439.86,299.52 440.13,293.60 440.40,295.39 440.67,324.00 440.94,303.51 441.22,317.90 441.49,299.26 441.76,313.08 442.03,300.85 442.30,297.18 442.57,309.21 442.84,320.01 443.11,293.66 443.38,304.19 443.65,304.80 443.92,296.56 444.19,299.64 444.46,294.88 444.73,296.41 445.00,297.54 445.27,304.61 445.54,305.94 445.81,296.61 446.08,289.28 446.35,299.24 446.62,306.85 446.89,296.41 447.16,299.11 447.43,296.93 447.70,310.83 447.97,303.99 448.24,293.16 448.51,294.55 448.78,301.06 449.05,304.26 449.32,306.38 449.59,294.45 449.86,296.51 450.14,308.04 450.41,301.67 450.68,299.25 450.95,299.79 451.22,322.73 451.49,300.00 451.76,305.17 452.03,300.98 452.30,302.19 452.57,315.05 452.84,324.00 453.11,301.33 453.38,298.00 453.65,309.71 453.92,298.25 454.19,289.93 454.46,317.87 454.73,302.81 455.00,313.35 455.27,302.57 455.54,316.75 455.81,303.75 456.08,297.71 456.35,291.76 456.62,305.78 456.89,307.90 457.16,319.02 457.43,295.91 457.70,307.59 457.97,302.37 458.24,305.07 458.51,297.72 458.78,300.79 459.06,305.55 459.33,320.81 459.60,296.88 459.87,305.04 460.14,313.57 460.41,324.00 460.68,299.28 460.95,297.59 461.22,323.08 461.49,324.00 461.76,305.16 462.03,295.25 462.30,321.31 462.57,303.39 462.84,319.43 463.11,308.35 463.38,314.86 463.65,298.81 463.92,313.33 464.19,300.28 464.46,303.94 464.73,316.05 465.00,315.25 465.27,299.53 465.54,300.34 465.81,303.99 466.08,306.39 466.35,303.73 466.62,298.17 466.89,301.08 467.16,311.60 467.43,319.40 467.70,295.26 467.97,307.52 468.25,312.74 468.52,295.16 468.79,316.03 469.06,298.22 469.33,308.47 469.60,307.37 469.87,309.16 470.14,302.53 470.41,304.77 470.68,308.17 470.95,304.92 471.22,310.05 471.49,305.36 471.76,305.21 472.03,294.40 472.30,309.11 472.57,306.28 472.84,301.25 473.11,313.27 473.38,313.87 473.65,305.71 473.92,300.08 474.19,306.03 474.46,298.23 474.73,298.84 475.00,305.21 475.27,297.78 475.54,305.46 475.81,306.85 476.08,295.72 476.35,309.71 476.62,297.51 476.89,312.43 477.17,313.93 477.44,306.93 477.71,296.44 477.98,306.79 478.25,304.29 478.52,324.00 478.79,299.18 479.06,317.47 479.33,324.00 479.60,312.45 479.87,315.47 480.14,300.60 480.41,324.00 480.68,306.60 480.95,324.00 481.22,321.55 481.49,299.96 481.76,314.43 482.03,322.97 482.30,297.01 482.57,303.85 482.84,313.29 483.11,299.83 483.38,320.01 483.65,302.37 483.92,315.56 484.19,299.46 484.46,306.87 484.73,321.94 485.00,300.99 485.27,302.14 485.54,306.95 485.81,303.26 486.09,295.68 486.36,300.41 486.63,299.92 486.90,323.67 487.17,311.02 487.44,319.97 487.71,300.11 487.98,314.36 488.25,298.72 488.52,307.49 488.79,309.91 489.06,304.08 489.33,318.50 489.60,308.03 489.87,308.58 490.14,319.10 490.41,298.42 490.68,324.00 490.95,309.75 491.22,304.76 491.49,314.87 491.76,302.21 492.03,324.00 492.30,308.53 492.57,304.10 492.84,313.65 493.11,305.70 493.38,300.32 493.65,312.94 493.92,296.33 494.19,315.80 494.46,301.99 494.73,310.00 495.00,324.00 495.28,308.73 495.55,310.62 495.82,303.18 496.09,291.08 496.36,295.54 496.63,299.66 496.90,309.43 497.17,305.51 497.44,307.14 497.71,320.00 497.98,299.22 498.25,301.45 498.52,310.35 498.79,294.71 499.06,291.52 499.33,304.01 499.60,298.49" fill="none" stroke="#b4ac24" stroke-width="0.55" stroke-linejoin="round" opacity="0.9"/><polyline points="229.30,301.11 229.69,310.33 230.07,303.28 230.46,300.19 230.84,306.84 231.23,295.53 231.62,316.74 232.00,309.47 232.39,292.20 232.78,310.88 233.16,306.78 233.55,312.43 233.93,305.33 234.32,298.48 234.71,306.45 235.09,295.45 235.48,294.57 235.86,315.53 236.25,297.42 236.64,309.29 237.02,315.64 237.41,299.55 237.80,295.58 238.18,321.92 238.57,292.97 238.95,319.28 239.34,310.37 239.73,302.20 240.11,296.98 240.50,295.30 240.88,315.62 241.27,318.28 241.66,304.07 242.04,310.33 242.43,303.74 242.81,318.93 243.20,305.63 243.59,292.70 243.97,305.10 244.36,322.29 244.75,308.67 245.13,301.03 245.52,317.28 245.90,313.77 246.29,313.73 246.68,317.74 247.06,311.24 247.45,312.36 247.83,300.27 248.22,299.16 248.61,303.46 248.99,292.09 249.38,309.64 249.77,292.76 250.15,297.47 250.54,313.20 250.92,299.16 251.31,306.41 251.70,320.84 252.08,299.87 252.47,324.00 252.85,302.15 253.24,296.81 253.63,297.50 254.01,315.42 254.40,315.62 254.79,297.45 255.17,300.78 255.56,300.28 255.94,294.39 256.33,300.69 256.72,307.94 257.10,309.32 257.49,312.81 257.87,296.29 258.26,305.26 258.65,308.08 259.03,311.35 259.42,305.48 259.81,300.80 260.19,288.20 260.58,304.32 260.96,292.85 261.35,307.26 261.74,304.06 262.12,304.96 262.51,306.48 262.89,308.08 263.28,304.18 263.67,299.60 264.05,299.38 264.44,316.52 264.83,314.78 265.21,303.89 265.60,310.55 265.98,300.92 266.37,293.24 266.76,307.13 267.14,305.60 267.53,306.14 267.91,307.37 268.30,317.14 268.69,306.75 269.07,299.32 269.46,316.81 269.85,303.22 270.23,310.20 270.62,300.72 271.00,312.23 271.39,298.95 271.78,306.33 272.16,303.41 272.55,298.39 272.93,304.92 273.32,299.47 273.71,305.41 274.09,300.79 274.48,301.99 274.86,311.33 275.25,317.64 275.64,301.38 276.02,300.44 276.41,301.11 276.80,295.39 277.18,316.49 277.57,309.53 277.95,300.30 278.34,307.35 278.73,320.95 279.11,307.43 279.50,309.50 279.88,304.72 280.27,321.29 280.66,318.12 281.04,313.02 281.43,303.87 281.82,300.04 282.20,309.87 282.59,313.41 282.97,302.36 283.36,308.53 283.75,308.34 284.13,304.91 284.52,315.25 284.90,305.61 285.29,298.26 285.68,301.48 286.06,323.67 286.45,299.45 286.84,309.36 287.22,311.02 287.61,315.90 287.99,306.39 288.38,305.90 288.77,308.10 289.15,301.78 289.54,310.51 289.92,295.74 290.31,293.29 290.70,305.11 291.08,307.40 291.47,299.91 291.86,321.95 292.24,302.78 292.63,309.46 293.01,297.31 293.40,319.26 293.79,308.97 294.17,303.27 294.56,310.23 294.94,315.68 295.33,311.44 295.72,304.59 296.10,302.29 296.49,309.09 296.88,302.12 297.26,302.46 297.65,289.30 298.03,306.03 298.42,300.77 298.81,306.11 299.19,312.56 299.58,310.12 299.96,299.18 300.35,324.00 300.74,302.55 301.12,315.78 301.51,287.89 301.89,319.10 302.28,297.09 302.67,297.91 303.05,308.11 303.44,303.71 303.83,303.51 304.21,316.29 304.60,315.65 304.98,322.27 305.37,304.74 305.76,311.03 306.14,309.79 306.53,314.65 306.91,300.07 307.30,300.47 307.69,297.30 308.07,300.60 308.46,308.10 308.85,293.43 309.23,311.78 309.62,311.22 310.00,309.49 310.39,312.03 310.78,299.13 311.16,296.15 311.55,312.44 311.93,309.27 312.32,315.00 312.71,313.00 313.09,296.96 313.48,306.32 313.87,309.50 314.25,307.51 314.64,304.63 315.02,305.38 315.41,313.68 315.80,307.29 316.18,306.04 316.57,303.69 316.95,319.61 317.34,307.90 317.73,301.85 318.11,311.16 318.50,297.73 318.89,319.68 319.27,297.28 319.66,291.33 320.04,305.08 320.43,311.98 320.82,322.86 321.20,311.30 321.59,313.04 321.97,312.14 322.36,303.85 322.75,310.49 323.13,296.18 323.52,297.44 323.91,318.21 324.29,309.14 324.68,313.21 325.06,300.99 325.45,303.56 325.84,308.33 326.22,299.34 326.61,296.72 326.99,301.92 327.38,315.85 327.77,293.64 328.15,306.88 328.54,324.00 328.92,305.80 329.31,300.30 329.70,297.81 330.08,286.90 330.47,301.27 330.86,301.37 331.24,302.64 331.63,295.25 332.01,305.17 332.40,294.52 332.79,316.62 333.17,319.09 333.56,299.48 333.94,309.83 334.33,307.12 334.72,321.72 335.10,287.86 335.49,315.96 335.88,297.02 336.26,303.02 336.65,312.52 337.03,296.67 337.42,307.60 337.81,302.00 338.19,308.73 338.58,312.14 338.96,304.58 339.35,324.00 339.74,313.28 340.12,296.09 340.51,321.44 340.90,308.28 341.28,317.96 341.67,314.95 342.05,303.48 342.44,310.06 342.83,312.32 343.21,323.12 343.60,289.23 343.98,302.60 344.37,314.30 344.76,298.29 345.14,321.09 345.53,314.83 345.92,307.00 346.30,316.63 346.69,309.54 347.07,299.06 347.46,304.53 347.85,322.03 348.23,303.86 348.62,309.49 349.00,299.46 349.39,318.04 349.78,298.53 350.16,319.04 350.55,303.59 350.94,324.00 351.32,307.49 351.71,302.61 352.09,298.04 352.48,307.66 352.87,306.81 353.25,300.94 353.64,298.86 354.02,298.48 354.41,314.90 354.80,301.77 355.18,305.22 355.57,289.76 355.95,324.00 356.34,308.32 356.73,306.06 357.11,312.06 357.50,319.24 357.89,307.37 358.27,294.05 358.66,295.67 359.04,297.42 359.43,311.94 359.82,324.00 360.20,298.37 360.59,299.10 360.97,307.43 361.36,310.85 361.75,319.69 362.13,305.12 362.52,304.33 362.91,306.58 363.29,294.64 363.68,309.56 364.06,324.00 364.45,298.24 364.84,313.71 365.22,299.61 365.61,302.51 365.99,319.52 366.38,305.13 366.77,301.09 367.15,301.27 367.54,299.93 367.93,298.52 368.31,301.95 368.70,294.43 369.08,293.87 369.47,306.08 369.86,324.00 370.24,303.15 370.63,298.77 371.01,324.00 371.40,308.56 371.79,308.42 372.17,309.03 372.56,297.74 372.95,298.53 373.33,301.09 373.72,306.95 374.10,300.19 374.49,306.81 374.88,299.68 375.26,304.38 375.65,302.22 376.03,299.64 376.42,318.14 376.81,302.11 377.19,300.74 377.58,300.72 377.97,324.00 378.35,301.59 378.74,307.78 379.12,298.61 379.51,308.62 379.90,295.24 380.28,299.06 380.67,291.03 381.05,301.94 381.44,311.82 381.83,303.11 382.21,296.96 382.60,316.42 382.98,295.68 383.37,299.42 383.76,303.53 384.14,303.14 384.53,317.25 384.92,302.78 385.30,299.03 385.69,308.76 386.07,298.77 386.46,308.38 386.85,312.59 387.23,295.34 387.62,312.26 388.00,299.07 388.39,309.02 388.78,299.80 389.16,291.82 389.55,306.74 389.94,299.86 390.32,317.41 390.71,308.12 391.09,307.91 391.48,298.69 391.87,324.00 392.25,307.33 392.64,308.26 393.02,296.06 393.41,298.19 393.80,296.72 394.18,296.57 394.57,299.96 394.96,291.97 395.34,309.89 395.73,310.50 396.11,301.04 396.50,297.25 396.89,299.39 397.27,303.16 397.66,298.58 398.04,300.47 398.43,302.53 398.82,312.02 399.20,302.83 399.59,310.10 399.98,309.73 400.36,305.29 400.75,322.53 401.13,300.19 401.52,302.98 401.91,324.00 402.29,322.96 402.68,297.77 403.06,313.61 403.45,305.73 403.84,306.74 404.22,304.34 404.61,296.16 405.00,293.31 405.38,302.06 405.77,321.72 406.15,313.70 406.54,324.00 406.93,294.91 407.31,303.43 407.70,302.21 408.08,315.39 408.47,301.38 408.86,310.24 409.24,299.34 409.63,298.76 410.01,314.84 410.40,301.33 410.79,305.05 411.17,293.67 411.56,295.79 411.95,300.19 412.33,293.85 412.72,310.88 413.10,307.55 413.49,300.45 413.88,306.80 414.26,306.97 414.65,300.79 415.03,296.24 415.42,302.44 415.81,290.41 416.19,305.63 416.58,299.90 416.97,300.10 417.35,305.03 417.74,299.24 418.12,295.91 418.51,293.30 418.90,300.85 419.28,296.97 419.67,302.23 420.05,298.42 420.44,298.55 420.83,307.99 421.21,317.47 421.60,306.86 421.99,312.36 422.37,306.45 422.76,315.18 423.14,297.72 423.53,287.43 423.92,303.80 424.30,311.52 424.69,304.74 425.07,310.74 425.46,299.74 425.85,304.69 426.23,297.42 426.62,297.09 427.01,300.06 427.39,293.38 427.78,295.66 428.16,298.87 428.55,289.04 428.94,308.08 429.32,298.42 429.71,298.04 430.09,304.33 430.48,293.72 430.87,303.98 431.25,297.89 431.64,296.94 432.02,293.82 432.41,296.56 432.80,311.32 433.18,299.54 433.57,300.07 433.96,296.07 434.34,291.52 434.73,299.47 435.11,309.05 435.50,296.30 435.89,304.65 436.27,300.20 436.66,295.53 437.04,307.25 437.43,293.71 437.82,300.13 438.20,291.72 438.59,299.07 438.98,293.77 439.36,300.75 439.75,296.53 440.13,302.19 440.52,312.27 440.91,308.89 441.29,296.73 441.68,299.45 442.06,303.17 442.45,306.57 442.84,293.82 443.22,295.56 443.61,303.78 444.00,295.56 444.38,301.52 444.77,292.67 445.15,297.72 445.54,297.03 445.93,295.26 446.31,290.00 446.70,302.65 447.08,298.47 447.47,293.04 447.86,298.47 448.24,307.27 448.63,299.55 449.02,303.99 449.40,307.23 449.79,302.33 450.17,299.30 450.56,296.53 450.95,302.10 451.33,312.64 451.72,298.51 452.10,300.30 452.49,299.44 452.88,305.49 453.26,303.39 453.65,304.88 454.04,302.46 454.42,295.34 454.81,301.67 455.19,303.90 455.58,297.65 455.97,302.98 456.35,294.12 456.74,298.41 457.12,299.54 457.51,300.69 457.90,320.31 458.28,323.00 458.67,296.37 459.06,294.65 459.44,305.29 459.83,306.55 460.21,303.44 460.60,307.45 460.99,301.25 461.37,300.91 461.76,314.31 462.14,289.78 462.53,296.53 462.92,301.56 463.30,293.97 463.69,301.63 464.07,313.23 464.46,304.31 464.85,307.98 465.23,287.81 465.62,319.06 466.01,294.29 466.39,314.71 466.78,294.22 467.16,300.75 467.55,304.94 467.94,299.54 468.32,307.59 468.71,318.29 469.09,296.48 469.48,311.43 469.87,319.26 470.25,318.17 470.64,308.08 471.03,297.86 471.41,306.12 471.80,302.49 472.18,297.51 472.57,316.70 472.96,303.53 473.34,318.53 473.73,303.30 474.11,296.27 474.50,300.96 474.89,298.42 475.27,313.90 475.66,299.54 476.05,306.65 476.43,309.67 476.82,307.78 477.20,300.90 477.59,308.02 477.98,312.29 478.36,302.51 478.75,308.17 479.13,319.41 479.52,297.76 479.91,300.67 480.29,295.85 480.68,303.61 481.07,299.21 481.45,304.15 481.84,299.92 482.22,289.85 482.61,324.00 483.00,299.88 483.38,316.55 483.77,299.43 484.15,301.17 484.54,292.90 484.93,317.92 485.31,317.73 485.70,304.64 486.09,297.94 486.47,296.56 486.86,307.45 487.24,302.88 487.63,324.00 488.02,303.45 488.40,318.78 488.79,299.94 489.17,307.94 489.56,306.01 489.95,309.23 490.33,294.62 490.72,310.67 491.10,317.47 491.49,324.00 491.88,307.42 492.26,299.05 492.65,299.01 493.04,302.65 493.42,312.83 493.81,292.50 494.19,301.29 494.58,291.47 494.97,322.91 495.35,310.06 495.74,305.50 496.12,306.47 496.51,304.11 496.90,316.55 497.28,304.11 497.67,303.43 498.06,305.80 498.44,295.91 498.83,304.13 499.21,324.00 499.60,324.00" fill="none" stroke="#dcd32c" stroke-width="0.55" stroke-linejoin="round"/><polyline points="229.30,315.20 230.05,300.06 230.80,310.58 231.55,304.63 232.30,311.67 233.05,305.30 233.81,308.05 234.56,295.33 235.31,308.04 236.06,300.48 236.81,305.89 237.56,306.01 238.31,306.09 239.06,297.92 239.81,312.39 240.56,302.27 241.31,298.27 242.06,303.54 242.82,307.26 243.57,303.42 244.32,300.57 245.07,299.98 245.82,298.79 246.57,309.82 247.32,310.14 248.07,301.88 248.82,318.90 249.57,301.80 250.32,301.03 251.07,313.71 251.83,302.61 252.58,299.82 253.33,301.94 254.08,296.26 254.83,300.87 255.58,307.98 256.33,314.01 257.08,312.46 257.83,322.35 258.58,303.28 259.33,307.01 260.08,314.27 260.84,299.89 261.59,318.35 262.34,298.90 263.09,300.68 263.84,311.25 264.59,302.56 265.34,304.69 266.09,301.86 266.84,312.37 267.59,294.13 268.34,301.95 269.09,302.49 269.85,305.45 270.60,300.41 271.35,311.99 272.10,314.14 272.85,296.97 273.60,300.23 274.35,311.19 275.10,298.65 275.85,304.03 276.60,307.15 277.35,301.40 278.10,308.72 278.86,313.52 279.61,298.35 280.36,305.29 281.11,298.42 281.86,300.74 282.61,307.23 283.36,303.66 284.11,294.68 284.86,295.77 285.61,311.55 286.36,295.72 287.11,305.00 287.87,303.64 288.62,304.03 289.37,312.82 290.12,299.09 290.87,311.05 291.62,317.57 292.37,310.34 293.12,302.48 293.87,318.18 294.62,316.45 295.37,306.30 296.12,309.74 296.88,306.05 297.63,306.08 298.38,297.89 299.13,308.41 299.88,304.83 300.63,300.53 301.38,299.98 302.13,295.63 302.88,305.51 303.63,304.70 304.38,296.67 305.13,302.13 305.88,310.31 306.64,308.41 307.39,313.63 308.14,297.15 308.89,314.57 309.64,307.39 310.39,309.64 311.14,299.01 311.89,306.70 312.64,295.53 313.39,299.79 314.14,304.17 314.89,301.60 315.65,313.21 316.40,303.35 317.15,318.62 317.90,300.00 318.65,318.68 319.40,299.94 320.15,302.43 320.90,314.22 321.65,305.35 322.40,306.62 323.15,307.06 323.91,306.23 324.66,298.24 325.41,298.66 326.16,304.51 326.91,304.16 327.66,295.63 328.41,313.24 329.16,300.43 329.91,311.34 330.66,298.85 331.41,298.09 332.16,301.11 332.92,309.00 333.67,308.35 334.42,309.47 335.17,305.44 335.92,305.22 336.67,313.77 337.42,306.49 338.17,320.43 338.92,303.30 339.67,312.50 340.42,293.20 341.17,308.23 341.93,307.49 342.68,306.14 343.43,301.07 344.18,294.80 344.93,298.80 345.68,302.43 346.43,308.98 347.18,298.49 347.93,317.71 348.68,295.15 349.43,305.16 350.18,312.44 350.94,305.96 351.69,309.55 352.44,307.78 353.19,301.56 353.94,299.67 354.69,309.06 355.44,299.09 356.19,309.75 356.94,315.10 357.69,300.49 358.44,302.89 359.19,299.96 359.95,312.39 360.70,307.88 361.45,303.21 362.20,303.60 362.95,306.30 363.70,315.82 364.45,302.15 365.20,311.06 365.95,302.77 366.70,307.25 367.45,312.97 368.20,305.07 368.96,307.50 369.71,304.27 370.46,324.00 371.21,295.87 371.96,302.70 372.71,296.16 373.46,302.78 374.21,297.42 374.96,300.74 375.71,308.21 376.46,316.19 377.21,298.94 377.97,305.05 378.72,298.42 379.47,302.96 380.22,299.81 380.97,297.77 381.72,307.37 382.47,300.54 383.22,300.51 383.97,303.10 384.72,302.63 385.47,300.37 386.22,304.67 386.98,308.30 387.73,305.52 388.48,316.46 389.23,299.84 389.98,297.42 390.73,297.80 391.48,305.88 392.23,294.51 392.98,311.10 393.73,307.52 394.48,317.21 395.23,315.60 395.99,302.80 396.74,309.89 397.49,303.39 398.24,299.90 398.99,294.55 399.74,313.45 400.49,303.30 401.24,301.04 401.99,297.08 402.74,315.93 403.49,298.57 404.24,304.75 405.00,307.76 405.75,306.53 406.50,290.84 407.25,309.31 408.00,313.06 408.75,301.91 409.50,305.31 410.25,305.14 411.00,306.00 411.75,303.31 412.50,306.15 413.25,300.72 414.00,303.44 414.76,305.70 415.51,303.33 416.26,295.36 417.01,308.75 417.76,303.54 418.51,301.31 419.26,299.65 420.01,303.53 420.76,315.39 421.51,294.78 422.26,303.65 423.02,297.57 423.77,294.47 424.52,294.21 425.27,305.54 426.02,294.22 426.77,304.78 427.52,300.39 428.27,297.35 429.02,299.14 429.77,297.76 430.52,293.32 431.27,296.24 432.02,294.83 432.78,296.07 433.53,298.79 434.28,298.96 435.03,299.07 435.78,296.18 436.53,301.48 437.28,292.62 438.03,296.52 438.78,292.35 439.53,298.63 440.28,304.85 441.04,301.63 441.79,308.99 442.54,302.98 443.29,293.80 444.04,306.25 444.79,297.52 445.54,293.12 446.29,297.50 447.04,296.91 447.79,294.93 448.54,308.51 449.29,294.85 450.05,304.21 450.80,311.51 451.55,315.64 452.30,297.04 453.05,291.65 453.80,304.55 454.55,299.12 455.30,303.54 456.05,305.28 456.80,295.86 457.55,305.06 458.30,316.05 459.06,298.48 459.81,296.97 460.56,303.20 461.31,306.17 462.06,306.46 462.81,303.80 463.56,297.52 464.31,303.52 465.06,305.30 465.81,301.06 466.56,305.48 467.31,313.74 468.07,306.53 468.82,310.05 469.57,299.61 470.32,306.90 471.07,299.20 471.82,299.29 472.57,304.15 473.32,311.11 474.07,308.49 474.82,305.16 475.57,304.59 476.32,303.33 477.08,297.75 477.83,301.20 478.58,310.00 479.33,304.49 480.08,315.79 480.83,296.10 481.58,298.61 482.33,306.55 483.08,303.53 483.83,304.82 484.58,303.70 485.33,307.25 486.09,303.11 486.84,309.88 487.59,296.85 488.34,303.82 489.09,300.17 489.84,308.83 490.59,307.74 491.34,302.18 492.09,302.84 492.84,324.00 493.59,304.14 494.34,307.01 495.10,311.75 495.85,299.84 496.60,313.09 497.35,300.01 498.10,299.38 498.85,320.42 499.60,305.73" fill="none" stroke="#efe53a" stroke-width="0.5" stroke-linejoin="round"/></svg>
<span class="t" style="top:627.84px;font-size:17.60px;line-height:21.12px;color:#d8d8d8;font-family:'Liberation Serif',serif;right:2088px;transform:scaleX(1.012);transform-origin:right center;">-20.00</span>
<span class="t" style="top:693.64px;font-size:17.60px;line-height:21.12px;color:#d8d8d8;font-family:'Liberation Serif',serif;right:2088px;transform:scaleX(1.012);transform-origin:right center;">-30.00</span>
<span class="t" style="top:759.44px;font-size:17.60px;line-height:21.12px;color:#d8d8d8;font-family:'Liberation Serif',serif;right:2088px;transform:scaleX(1.012);transform-origin:right center;">-40.00</span>
<span class="t" style="top:825.24px;font-size:17.60px;line-height:21.12px;color:#d8d8d8;font-family:'Liberation Serif',serif;right:2088px;transform:scaleX(1.012);transform-origin:right center;">-50.00</span>
<span class="t" style="top:891.04px;font-size:17.60px;line-height:21.12px;color:#d8d8d8;font-family:'Liberation Serif',serif;right:2088px;transform:scaleX(1.012);transform-origin:right center;">-60.00</span>
<span class="t" style="top:956.84px;font-size:17.60px;line-height:21.12px;color:#d8d8d8;font-family:'Liberation Serif',serif;right:2088px;transform:scaleX(1.012);transform-origin:right center;">-70.00</span>
<span class="t" style="top:1022.64px;font-size:17.60px;line-height:21.12px;color:#d8d8d8;font-family:'Liberation Serif',serif;right:2088px;transform:scaleX(1.012);transform-origin:right center;">-80.00</span>
<span class="t" style="top:1088.44px;font-size:17.60px;line-height:21.12px;color:#d8d8d8;font-family:'Liberation Serif',serif;right:2088px;transform:scaleX(1.012);transform-origin:right center;">-90.00</span>
<span class="t" style="top:1154.24px;font-size:17.60px;line-height:21.12px;color:#d8d8d8;font-family:'Liberation Serif',serif;right:2088px;transform:scaleX(0.914);transform-origin:right center;">-100.00</span>
<span class="t" style="top:1220.04px;font-size:17.60px;line-height:21.12px;color:#d8d8d8;font-family:'Liberation Serif',serif;right:2088px;transform:scaleX(0.925);transform-origin:right center;">-110.00</span>
<span class="t" style="top:1285.84px;font-size:17.60px;line-height:21.12px;color:#d8d8d8;font-family:'Liberation Serif',serif;right:2088px;transform:scaleX(0.914);transform-origin:right center;">-120.00</span>
<span class="t" style="left:845.60px;top:966px;font-size:13.20px;line-height:16px;color:#eee;font-family:'Liberation Sans',sans-serif;transform:translate(-50%,-50%) rotate(-90deg) scaleX(0.8);">Power (dBm)</span>
<span class="t" style="top:1316.80px;font-size:16px;line-height:19.20px;color:#eee;font-family:'Liberation Sans',sans-serif;left:838.80px;transform:scaleX(0.747);transform-origin:left center;">Start: 3.9800 GHz</span>
<span class="t" style="top:1335.20px;font-size:16px;line-height:19.20px;color:#eee;font-family:'Liberation Sans',sans-serif;left:838.80px;transform:scaleX(0.752);transform-origin:left center;">PRBW: 10.00 kHz&nbsp; PVBW: 10.00 kHz</span>
<span class="t" style="top:1319.60px;font-size:16px;line-height:19.20px;color:#eee;font-family:'Liberation Sans',sans-serif;right:1516.80px;transform:scaleX(0.773);transform-origin:right center;">Center: 4.0000 GHz</span>
<span class="t" style="top:1340.80px;font-size:16px;line-height:19.20px;color:#eee;font-family:'Liberation Sans',sans-serif;right:1518.40px;transform:scaleX(0.77);transform-origin:right center;">Span: 40.00 MHz</span>
<span class="t" style="top:1316px;font-size:16px;line-height:19.20px;color:#eee;font-family:'Liberation Sans',sans-serif;right:950.80px;transform:scaleX(0.745);transform-origin:right center;">Stop: 4.0200 GHz</span>
<span class="t" style="top:1335.60px;font-size:16px;line-height:19.20px;color:#eee;font-family:'Liberation Sans',sans-serif;right:950.80px;transform:scaleX(0.745);transform-origin:right center;">Sweep Time: 0.031 Sec.</span>
<span class="t" style="top:1354.40px;font-size:16px;line-height:19.20px;color:#eee;font-family:'Liberation Sans',sans-serif;right:950.80px;transform:scaleX(0.754);transform-origin:right center;">Speed: 1.290 GHz/Sec.</span>
<div style="left:2054.40px;top:450.80px;width:250.80px;height:934.80px;background:#d5d5d5;"></div>
<span class="t" style="top:461.12px;font-size:16.80px;line-height:20.16px;color:#111;font-family:'Liberation Sans',sans-serif;font-weight:bold;left:2180px;transform:translateX(-50%) scaleX(0.857);transform-origin:center center;">SAVE DATA</span>
<span class="t" style="top:498.80px;font-size:16px;line-height:19.20px;color:#333;font-family:'Liberation Sans',sans-serif;left:2072px;transform:scaleX(0.718);transform-origin:left center;">Format:</span>
<div style="left:2149.20px;top:497.20px;width:138px;height:20px;background:#e0e0e0;box-shadow:0 0 0 1.20px #bdbdbd;"></div>
<span class="t" style="top:497.60px;font-size:16px;line-height:19.20px;color:#333;font-family:'Liberation Sans',sans-serif;left:2154px;transform:scaleX(0.746);transform-origin:left center;">Frequency Domain</span>
<svg style="left:2274.40px;top:503.20px" width="9.6" height="8" viewBox="0 0 2.4 2"><path d="M0.2 0.4h2l-1 1.3z" fill="#444"/></svg>
<span class="t" style="top:528.80px;font-size:16px;line-height:19.20px;color:#333;font-family:'Liberation Sans',sans-serif;left:2072px;transform:scaleX(0.714);transform-origin:left center;">Comments:</span>
<div style="left:2074px;top:552.40px;width:214.40px;height:189.60px;background:#fff;box-shadow:0 0 0 1.40px #aaa;"></div>
<div style="left:2072px;top:780px;width:168px;height:20.40px;background:#fff;"></div>
<span class="t" style="top:780.80px;font-size:16px;line-height:19.20px;color:#333;font-family:'Liberation Sans',sans-serif;left:2074.40px;transform:scaleX(0.735);transform-origin:left center;">/Local/Temp/_ABCLDSAV2fgvc</span>
<div style="left:2254.40px;top:776px;width:29.20px;height:25.20px;background:#ececec;box-shadow:0 0 0 1.20px #c4c4c4;"></div>
<svg style="left:2258.40px;top:781.20px" width="21.6" height="15.2" viewBox="0 0 5.4 3.8"><path d="M0.2 0.5h1.8l0.5 0.6h2.7v2.5h-5z" fill="#e4c050"/><path d="M0.2 1.6h5v2h-5z" fill="#f0d870"/></svg>
<div style="left:2074px;top:840.40px;width:212.40px;height:23.60px;background:#e0e0e0;box-shadow:0 0 0 1.20px #bdbdbd;"></div>
<span class="t" style="top:842.80px;font-size:16px;line-height:19.20px;color:#222;font-family:'Liberation Sans',sans-serif;left:2180.40px;transform:translateX(-50%) scaleX(0.76);transform-origin:center center;">Save Data</span>
<div style="left:2074px;top:901.20px;width:212.40px;height:25.20px;background:#e0e0e0;box-shadow:0 0 0 1.20px #bdbdbd;"></div>
<span class="t" style="top:904.40px;font-size:16px;line-height:19.20px;color:#222;font-family:'Liberation Sans',sans-serif;left:2181.60px;transform:translateX(-50%) scaleX(0.78);transform-origin:center center;">Save Data As</span>
<svg style="left:2312px;top:474px" width="28" height="22" viewBox="0 0 7 5.5"><path d="M0.3 5.4L3.1 1.2L5.9 5.4z" fill="#c88c3c"/><path d="M1.7 5.4L3.1 3.3L4.5 5.4z" fill="#757575" opacity="0.6"/></svg>
<span class="t" style="left:2342px;top:453.80px;font-size:48.80px;line-height:56px;font-family:'Liberation Sans',sans-serif;font-weight:bold;color:#d3dde6;transform:scaleX(0.558);transform-origin:left center;">think<span style="color:#f09a28;margin-left:4px">RF</span></span>
<span class="t" style="top:500.96px;font-size:18.40px;line-height:22.08px;color:#111;font-family:'Liberation Sans',sans-serif;font-weight:bold;left:2377.20px;transform:translateX(-50%) scaleX(1.015);transform-origin:center center;">S240</span>
<span class="t" style="top:523.12px;font-size:16.80px;line-height:20.16px;color:#111;font-family:'Liberation Sans',sans-serif;font-weight:bold;left:2377.20px;transform:translateX(-50%) scaleX(0.865);transform-origin:center center;">Real-Time</span>
<span class="t" style="top:538.32px;font-size:16.80px;line-height:20.16px;color:#111;font-family:'Liberation Sans',sans-serif;font-weight:bold;left:2377.20px;transform:translateX(-50%) scaleX(0.881);transform-origin:center center;">Spectrum Analyzer</span>
<div style="left:2310px;top:600.40px;width:134.40px;height:33.60px;background:#14a614;"></div>
<span class="t" style="top:607.12px;font-size:16.80px;line-height:20.16px;color:#b8f8b8;font-family:'Liberation Sans',sans-serif;left:2377.20px;transform:translateX(-50%) scaleX(0.857);transform-origin:center center;">Continuous Capture</span>
<div style="left:2310px;top:649.20px;width:134.40px;height:32.40px;background:#90f890;"></div>
<span class="t" style="top:655.32px;font-size:16.80px;line-height:20.16px;color:#123;font-family:'Liberation Sans',sans-serif;left:2377.20px;transform:translateX(-50%) scaleX(0.774);transform-origin:center center;">Single Capture</span>
<div style="left:2310px;top:697.60px;width:134.40px;height:33.20px;background:#e0e0e0;"></div>
<span class="t" style="top:704.12px;font-size:16.80px;line-height:20.16px;color:#222;font-family:'Liberation Sans',sans-serif;left:2377.20px;transform:translateX(-50%) scaleX(0.726);transform-origin:center center;">Traces</span>
<div style="left:2310px;top:747.20px;width:134.40px;height:33.20px;background:#e0e0e0;"></div>
<span class="t" style="top:753.72px;font-size:16.80px;line-height:20.16px;color:#222;font-family:'Liberation Sans',sans-serif;left:2377.20px;transform:translateX(-50%) scaleX(0.801);transform-origin:center center;">Markers / Peaks</span>
<div style="left:2310px;top:798.40px;width:134.40px;height:33.60px;background:#e0e0e0;"></div>
<span class="t" style="top:805.12px;font-size:16.80px;line-height:20.16px;color:#222;font-family:'Liberation Sans',sans-serif;left:2377.20px;transform:translateX(-50%) scaleX(0.837);transform-origin:center center;">Trigger</span>
<div style="left:2310px;top:847.20px;width:134.40px;height:34px;background:#e0e0e0;"></div>
<span class="t" style="top:854.12px;font-size:16.80px;line-height:20.16px;color:#222;font-family:'Liberation Sans',sans-serif;left:2377.20px;transform:translateX(-50%) scaleX(0.815);transform-origin:center center;">Corrections</span>
<div style="left:2310px;top:896.40px;width:134.40px;height:34.40px;background:#e0e0e0;"></div>
<span class="t" style="top:903.52px;font-size:16.80px;line-height:20.16px;color:#222;font-family:'Liberation Sans',sans-serif;left:2377.20px;transform:translateX(-50%) scaleX(0.792);transform-origin:center center;">Measurements</span>
<div style="left:2310px;top:948px;width:134.40px;height:34px;background:#e0e0e0;"></div>
<span class="t" style="top:954.92px;font-size:16.80px;line-height:20.16px;color:#111;font-family:'Liberation Sans',sans-serif;font-weight:bold;left:2377.20px;transform:translateX(-50%) scaleX(0.75);transform-origin:center center;">SAVE DATA</span>
<div style="left:2310px;top:997.60px;width:134.40px;height:33.60px;background:#e0e0e0;"></div>
<span class="t" style="top:1004.32px;font-size:16.80px;line-height:20.16px;color:#222;font-family:'Liberation Sans',sans-serif;left:2377.20px;transform:translateX(-50%) scaleX(0.836);transform-origin:center center;">Load Data</span>
<div style="left:2310px;top:1047.20px;width:134.40px;height:34px;background:#e0e0e0;"></div>
<span class="t" style="top:1054.12px;font-size:16.80px;line-height:20.16px;color:#222;font-family:'Liberation Sans',sans-serif;left:2377.20px;transform:translateX(-50%) scaleX(0.828);transform-origin:center center;">System</span>
<div style="left:2310px;top:1097.60px;width:134.40px;height:33.20px;background:#e0e0e0;"></div>
<span class="t" style="top:1104.12px;font-size:16.80px;line-height:20.16px;color:#222;font-family:'Liberation Sans',sans-serif;left:2377.20px;transform:translateX(-50%) scaleX(0.847);transform-origin:center center;">Device Info</span>
<div style="left:2310px;top:1148px;width:134.40px;height:32.40px;background:#ffa800;"></div>
<span class="t" style="top:1154.12px;font-size:16.80px;line-height:20.16px;color:#432;font-family:'Liberation Sans',sans-serif;left:2377.20px;transform:translateX(-50%) scaleX(0.783);transform-origin:center center;">Preset</span>
<span class="t" style="top:1199.20px;font-size:16px;line-height:19.20px;color:#111;font-family:'Liberation Sans',sans-serif;font-weight:bold;left:2377.20px;transform:translateX(-50%) scaleX(0.906);transform-origin:center center;">DISPLAYS</span>
<div style="left:2310px;top:1232px;width:134.40px;height:32.80px;background:#5cf2ee;"></div>
<span class="t" style="top:1238.32px;font-size:16.80px;line-height:20.16px;color:#123;font-family:'Liberation Sans',sans-serif;left:2377.20px;transform:translateX(-50%) scaleX(0.828);transform-origin:center center;">Spectrogram</span>
<div style="left:2310px;top:1282.40px;width:134.40px;height:32.40px;background:#5cf2ee;"></div>
<span class="t" style="top:1288.52px;font-size:16.80px;line-height:20.16px;color:#123;font-family:'Liberation Sans',sans-serif;left:2377.20px;transform:translateX(-50%) scaleX(0.788);transform-origin:center center;">Persistence</span>
<div style="left:2310px;top:1332px;width:134.40px;height:34px;background:#5cf2ee;"></div>
<span class="t" style="top:1338.92px;font-size:16.80px;line-height:20.16px;color:#123;font-family:'Liberation Sans',sans-serif;left:2377.20px;transform:translateX(-50%) scaleX(0.802);transform-origin:center center;">Time Domain</span>
</div></div></body></html>
